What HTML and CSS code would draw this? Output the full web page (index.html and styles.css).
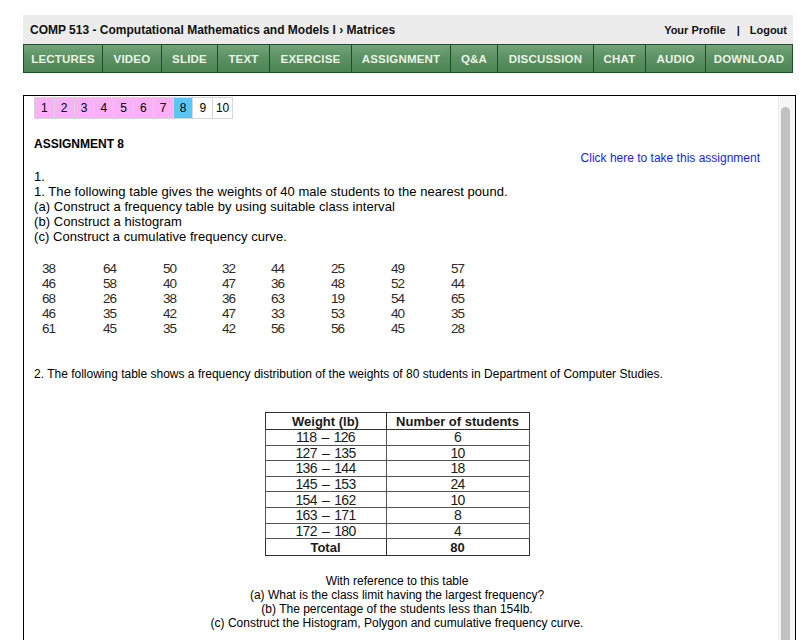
FILE: index.html
```html
<!DOCTYPE html>
<html>
<head>
<meta charset="utf-8">
<title>COMP 513 - Assignment 8</title>
<link rel="stylesheet" href="styles.css">
</head>
<body>
<div class="page">
  <div class="topbar">
    <span class="title">COMP 513 - Computational Mathematics and Models I › Matrices</span>
    <span class="user"><a href="#">Your Profile</a><span class="sep">|</span><a href="#">Logout</a></span>
  </div>
  <nav class="menu">
    <a href="#">LECTURES</a>
    <a href="#">VIDEO</a>
    <a href="#">SLIDE</a>
    <a href="#">TEXT</a>
    <a href="#">EXERCISE</a>
    <a href="#">ASSIGNMENT</a>
    <a href="#">Q&amp;A</a>
    <a href="#">DISCUSSION</a>
    <a href="#">CHAT</a>
    <a href="#">AUDIO</a>
    <a href="#">DOWNLOAD</a>
  </nav>
  <div class="frame">
    <div class="content">
      <div class="pager">
        <a href="#" class="done">1</a>
        <a href="#" class="done">2</a>
        <a href="#" class="done">3</a>
        <a href="#" class="done">4</a>
        <a href="#" class="done">5</a>
        <a href="#" class="done">6</a>
        <a href="#" class="done">7</a>
        <a href="#" class="current">8</a>
        <a href="#">9</a>
        <a href="#">10</a>
      </div>
      <h2 class="heading">ASSIGNMENT 8</h2>
      <div class="take"><a href="#">Click here to take this assignment</a></div>
      <div class="question">
        <p>1.</p>
        <p>1. The following table gives the weights of 40 male students to the nearest pound.</p>
        <p>(a) Construct a frequency table by using suitable class interval</p>
        <p>(b) Construct a histogram</p>
        <p>(c) Construct a cumulative frequency curve.</p>
      </div>
      <div class="data">
        <span>38</span><span>64</span><span>50</span><span>32</span><span>44</span><span>25</span><span>49</span><span>57</span>
        <span>46</span><span>58</span><span>40</span><span>47</span><span>36</span><span>48</span><span>52</span><span>44</span>
        <span>68</span><span>26</span><span>38</span><span>36</span><span>63</span><span>19</span><span>54</span><span>65</span>
        <span>46</span><span>35</span><span>42</span><span>47</span><span>33</span><span>53</span><span>40</span><span>35</span>
        <span>61</span><span>45</span><span>35</span><span>42</span><span>56</span><span>56</span><span>45</span><span>28</span>
      </div>
      <p class="q2">2. The following table shows a frequency distribution of the weights of 80 students in Department of Computer Studies.</p>
      <table class="freq">
        <thead>
          <tr><th class="c1">Weight (lb)</th><th class="c2">Number of students</th></tr>
        </thead>
        <tbody>
          <tr><td>118 – 126</td><td>6</td></tr>
          <tr><td>127 – 135</td><td>10</td></tr>
          <tr><td>136 – 144</td><td>18</td></tr>
          <tr><td>145 – 153</td><td>24</td></tr>
          <tr><td>154 – 162</td><td>10</td></tr>
          <tr><td>163 – 171</td><td>8</td></tr>
          <tr><td>172 – 180</td><td>4</td></tr>
        </tbody>
        <tfoot>
          <tr><th>Total</th><th>80</th></tr>
        </tfoot>
      </table>
      <div class="ref">
        <p>With reference to this table</p>
        <p>(a) What is the class limit having the largest frequency?</p>
        <p>(b) The percentage of the students less than 154lb.</p>
        <p>(c) Construct the Histogram, Polygon and cumulative frequency curve.</p>
      </div>
    </div>
    <div class="scroll"><div class="thumb"></div></div>
  </div>
</div>
</body>
</html>
```
FILE: styles.css
```css
html, body {
  margin: 0;
  padding: 0;
  background: #fff;
  overflow: hidden;
}
body {
  font-family: "Liberation Sans", Arial, sans-serif;
  color: #000;
}
a { text-decoration: none; color: inherit; }
p { margin: 0; }

.page {
  width: 770px;
  margin: 15px 0 0 23px;
}

.topbar {
  height: 29px;
  background: #ececec;
  display: flex;
  align-items: center;
  justify-content: space-between;
  padding: 0 6px 0 7px;
  font-size: 12px;
  font-weight: bold;
  color: #111;
}
.user { color: #111; font-size: 11px; }
.user .sep { margin: 0 10px 0 11px; }

.menu {
  display: grid;
  grid-template-columns: 80px 59px 56px 52px 82px 99px 47px 96px 52px 60px 87px;
  height: 29px;
}
.menu a {
  display: flex;
  align-items: center;
  justify-content: center;
  background: linear-gradient(#72a579, #5c9263 45%, #4d8554);
  border: 1px solid #1f4d25;
  border-left-width: 0;
  color: #eaf3e6;
  font-size: 11.5px;
  font-weight: bold;
  letter-spacing: 0.2px;
}
.menu a:first-child { border-left-width: 1px; }

.frame {
  margin-top: 22px;
  width: 771px;
  height: 560px;
  border: 1px solid #000;
  display: flex;
}
.content {
  flex: 1;
  padding: 1px 18px 0 10px;
}
.scroll {
  width: 14px;
  background: #f6f6f6;
  border-left: 1px solid #ebebeb;
  padding: 11px 0 0 2px;
}
.thumb {
  width: 9px;
  height: 600px;
  background: #c1c1c1;
  border-radius: 5px;
}

.pager {
  display: flex;
  border-left: 1px solid #d6d6d6;
  width: max-content;
}
.pager a {
  width: 18.8px;
  height: 20px;
  border: 1px solid #d6d6d6;
  border-left: 0;
  display: flex;
  align-items: center;
  justify-content: center;
  font-size: 12px;
  color: #000;
  background: #fff;
}
.pager a.done { background: #fbb1f7; }
.pager a.current { background: #58c7f7; }

.heading {
  margin: 18px 0 0;
  font-size: 12px;
  line-height: 14px;
  font-weight: bold;
}
.take {
  text-align: right;
  font-size: 12px;
  line-height: 14px;
}
.take a { color: #1a1aff; }

.question {
  margin-top: 4px;
  font-size: 13px;
  line-height: 15px;
  letter-spacing: 0.05px;
}

.data {
  margin: 17px 0 0 8px;
  display: grid;
  grid-template-columns: 61px 60px 59px 49px 60px 60px 60px 30px;
  font-size: 13.5px;
  letter-spacing: -1px;
  line-height: 15px;
  color: #2a2a2a;
}

.q2 {
  margin-top: 31px;
  font-size: 12px;
  line-height: 14px;
}

.freq {
  margin: 31px auto 0;
  border-collapse: collapse;
  width: 265px;
  border: 1px solid #222;
  color: #1a1a1a;
}
.freq .c1 { width: 120px; }
.freq th {
  font-size: 13px;
  font-weight: bold;
  height: 16px;
  padding: 0;
  line-height: 15px;
  border: 1px solid #333;
}
.freq td {
  font-size: 14px;
  letter-spacing: -0.7px;
  word-spacing: 2px;
  height: 14.6px;
  line-height: 14px;
  padding: 0;
  text-align: center;
  border: 1px solid #555;
}

.ref {
  margin-top: 18px;
  text-align: center;
  font-size: 12px;
  line-height: 14px;
}
```
